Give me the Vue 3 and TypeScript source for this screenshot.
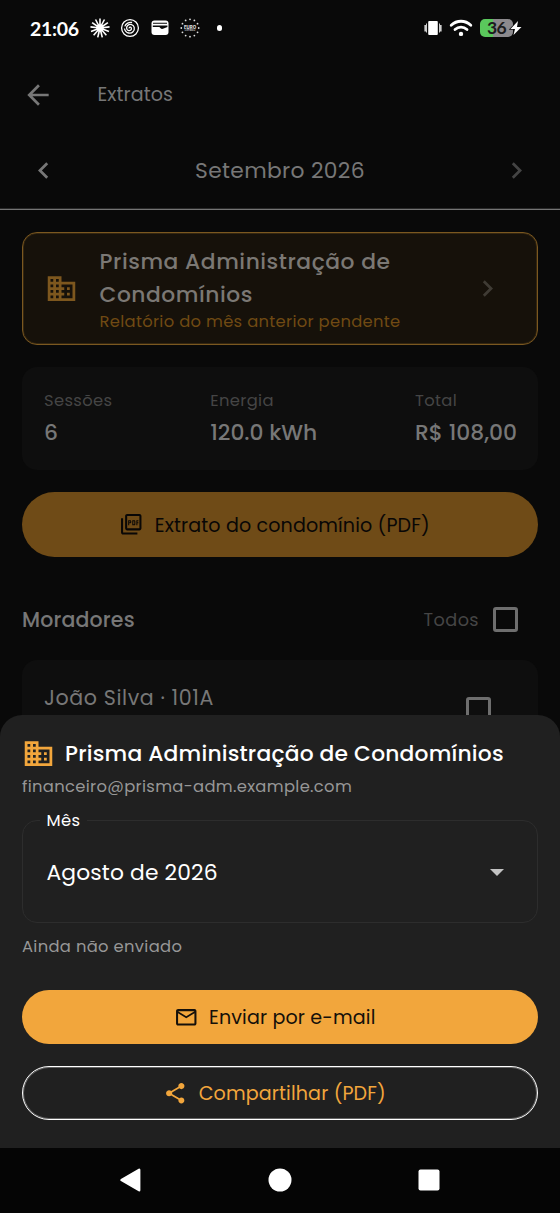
<script setup lang="ts">
interface Stat {
  label: string
  value: string
  key: string
}

const stats: Stat[] = [
  { label: 'Sessões', value: '6', key: 'sessions' },
  { label: 'Energia', value: '120.0 kWh', key: 'energy' },
  { label: 'Total', value: 'R$ 108,00', key: 'total' },
]

const businessPath =
  'M12 7V3H2v18h20V7H12zM6 19H4v-2h2v2zm0-4H4v-2h2v2zm0-4H4V9h2v2zm0-4H4V5h2v2zm4 12H8v-2h2v2zm0-4H8v-2h2v2zm0-4H8V9h2v2zm0-4H8V5h2v2zm10 12h-8v-2h2v-2h-2v-2h2v-2h-2V9h8v10zm-2-8h-2v2h2v-2zm0 4h-2v2h2v-2z'
const chevronRight = 'M8.59 16.59 13.17 12 8.59 7.41 10 6l6 6-6 6z'

const ring = (count: number, radius: number) =>
  Array.from({ length: count }, (_, i) => {
    const a = (i * 2 * Math.PI) / count
    return { x: 10 + radius * Math.sin(a), y: 10 - radius * Math.cos(a) }
  })
const rays = ring(13, 9.6)
const stars = ring(12, 8.7)
</script>

<template>
  <div class="screen">
    <header class="status">
      <span class="clock">21:06</span>
      <svg class="burst" viewBox="0 0 20 20">
        <line v-for="(p, i) in rays" :key="i" x1="10" y1="10" :x2="p.x" :y2="p.y" />
        <circle cx="10" cy="10" r="3" />
      </svg>
      <svg class="spiral" viewBox="0 0 20 20">
        <circle cx="10" cy="10" r="8.4" />
        <path d="M9.2 10.4c-.3-1.3 1.6-1.7 2.1-.5.7 1.7-1 3.2-2.7 2.7-2.3-.7-2.6-3.7-.9-5.2 2.3-2 5.8-.8 6.5 2 .8 3.4-2.2 6.3-5.5 5.6-2.3-.5-3.9-2.3-4.2-4.5M4.8 8.4c1-3 4.3-4.6 7.3-3.9" />
      </svg>
      <svg class="wallet" viewBox="0 0 18 16">
        <rect x="0.5" y="0.5" width="17" height="14.5" rx="3" fill="#fff" />
        <path d="M2 2.7h14v1.1H2zM1.8 5.4h14.6v1.5l-4.4 1.9c-1 .4-2-.1-2.7-.9l-.9-1H1.8z" fill="#090909" />
      </svg>
      <svg class="euro" viewBox="0 0 20 20">
        <circle v-for="(p, i) in stars" :key="i" :cx="p.x" :cy="p.y" r="0.9" />
        <text x="10" y="10.5" text-anchor="middle" class="euro-name">EURO</text>
        <text x="10" y="13.3" text-anchor="middle" class="euro-sub">LOTERIJ</text>
      </svg>
      <i class="dot"></i>
      <span class="grow"></span>
      <svg class="vibrate" viewBox="0 0 18 16">
        <rect x="4.2" y="1" width="9.6" height="14" rx="1" />
        <rect x="0.5" y="5" width="1.3" height="6.5" />
        <rect x="2" y="3.5" width="0.8" height="9" />
        <rect x="16.2" y="5" width="1.3" height="6.5" />
        <rect x="15.2" y="3.5" width="0.8" height="9" />
      </svg>
      <svg class="wifi" viewBox="0 0 24 18">
        <path d="M2.2 6.2c5.6-5.3 14-5.3 19.6 0M6 10.5c3.5-3.2 8.5-3.2 12 0" />
        <circle cx="12" cy="14.9" r="2.2" />
      </svg>
      <span class="battery">
        <span class="level">36</span>
        <svg class="bolt" viewBox="0 0 14 16">
          <path d="M9 1 1.5 9H6l-1.5 6L12.5 7H8z" />
        </svg>
      </span>
    </header>

    <nav class="appbar">
      <svg class="i32" viewBox="0 0 24 24"><path d="M20 11H7.83l5.59-5.59L12 4l-8 8 8 8 1.41-1.41L7.83 13H20v-2z" /></svg>
      <span class="page-title">Extratos</span>
    </nav>

    <div class="month">
      <svg class="i33" viewBox="0 0 24 24"><path d="M15.41 7.41 14 6l-6 6 6 6 1.41-1.41L10.83 12z" /></svg>
      <span class="month-name">Setembro 2026</span>
      <svg class="i33 off" viewBox="0 0 24 24"><path :d="chevronRight" /></svg>
    </div>

    <main class="content">
      <section class="manager">
        <svg class="i33 biz" viewBox="0 0 24 24"><path :d="businessPath" /></svg>
        <div class="manager-text">
          <div class="manager-name">Prisma Administração de Condomínios</div>
          <div class="manager-note">Relatório do mês anterior pendente</div>
        </div>
        <svg class="i33 go" viewBox="0 0 24 24"><path :d="chevronRight" /></svg>
      </section>

      <section class="stats">
        <div v-for="s in stats" :key="s.key" class="stat">
          <div class="stat-label">{{ s.label }}</div>
          <div class="stat-value">{{ s.value }}</div>
        </div>
      </section>

      <button class="btn statement">
        <svg class="i24" viewBox="0 0 24 24"><path d="M20 2H8c-1.1 0-2 .9-2 2v12c0 1.1.9 2 2 2h12c1.1 0 2-.9 2-2V4c0-1.1-.9-2-2-2zm0 14H8V4h12v12zM4 6H2v14c0 1.1.9 2 2 2h14v-2H4V6zm12 6V9c0-.55-.45-1-1-1h-2v5h2c.55 0 1-.45 1-1zm-2-3h1v3h-1V9zm4 2h1v-1h-1V9h1V8h-2v5h1zm-8 0h1c.55 0 1-.45 1-1V9c0-.55-.45-1-1-1H9v5h1v-2zm0-2h1v1h-1V9z" /></svg>
        <span>Extrato do condomínio (PDF)</span>
      </button>

      <div class="residents-head">
        <h2>Moradores</h2>
        <span class="all">Todos</span>
        <i class="check"></i>
      </div>

      <section class="resident">
        <span class="resident-name">João Silva · 101A</span>
        <i class="check"></i>
      </section>
    </main>

    <div class="overlay">
      <section class="sheet">
        <div class="sheet-head">
          <svg class="i33" viewBox="0 0 24 24"><path :d="businessPath" /></svg>
          <span>Prisma Administração de Condomínios</span>
        </div>
        <div class="email">financeiro@prisma-adm.example.com</div>
        <fieldset class="field">
          <legend>Mês</legend>
          <span class="field-value">Agosto de 2026</span>
          <svg class="caret" viewBox="0 0 14 7"><path d="M0 0h14L7 7z" /></svg>
        </fieldset>
        <div class="sent">Ainda não enviado</div>
        <button class="btn send">
          <svg class="i24" viewBox="0 0 24 24"><path d="M22 6c0-1.1-.9-2-2-2H4c-1.1 0-2 .9-2 2v12c0 1.1.9 2 2 2h16c1.1 0 2-.9 2-2V6zm-2 0l-8 5-8-5h16zm0 12H4V8l8 5 8-5v10z" /></svg>
          <span>Enviar por e-mail</span>
        </button>
        <button class="btn share">
          <svg class="i24" viewBox="0 0 24 24"><path d="M18 16.08c-.76 0-1.44.3-1.96.77L8.91 12.7c.05-.23.09-.46.09-.7s-.04-.47-.09-.7l7.05-4.11c.54.5 1.25.81 2.04.81 1.66 0 3-1.34 3-3s-1.34-3-3-3-3 1.34-3 3c0 .24.04.47.09.7L8.04 9.81C7.5 9.31 6.79 9 6 9c-1.66 0-3 1.34-3 3s1.34 3 3 3c.79 0 1.5-.31 2.04-.81l7.12 4.16c-.05.21-.08.43-.08.65 0 1.61 1.31 2.92 2.92 2.92s2.92-1.31 2.92-2.92-1.31-2.92-2.92-2.92z" /></svg>
          <span>Compartilhar (PDF)</span>
        </button>
      </section>
      <footer class="softkeys">
        <svg class="key" viewBox="0 0 24 24"><path d="M21.2 1.8v20.4L3.5 12z" stroke="#fff" stroke-width="2.4" stroke-linejoin="round" /></svg>
        <svg class="key" viewBox="0 0 24 24"><circle cx="12" cy="12" r="11.5" /></svg>
        <svg class="key" viewBox="0 0 24 24"><rect x="1.5" y="1.5" width="21" height="21" rx="2" /></svg>
      </footer>
    </div>
  </div>
</template>

<style>
body {
  background: #090909;
}
</style>

<style scoped>
.screen {
  position: relative;
  width: 560px;
  height: 1213px;
  overflow: hidden;
  background: #090909;
  color: #777;
  font-family: Poppins, Inter, sans-serif;
  font-weight: 400;
  white-space: nowrap;
}
.screen * {
  box-sizing: border-box;
}
svg {
  display: block;
  flex: none;
  fill: currentColor;
}
.i24 { width: 24.5px; height: 24.5px; }
.i32 { width: 32px; height: 32px; }
.i33 { width: 33px; height: 33px; }
.grow { flex: 1; }

.status {
  display: flex;
  align-items: center;
  height: 57px;
  padding: 0 37px 1px 30px;
  color: #fff;
}
.clock {
  width: 60px;
  font-family: Lato, sans-serif;
  font-size: 19.5px;
  font-weight: 700;
  letter-spacing: -0.3px;
}
.burst { width: 20px; height: 20px; stroke: #fff; stroke-width: 1.6; }
.spiral { width: 20px; height: 20px; margin-left: 9.5px; fill: none; stroke: #fff; stroke-width: 1.3; }
.wallet { width: 18px; height: 16px; margin-left: 11px; }
.euro { width: 20px; height: 20px; margin-left: 11px; color: #ddd; }
.euro-name { font-family: Inter, sans-serif; font-size: 4.4px; font-weight: 800; }
.euro-sub { font-family: Inter, sans-serif; font-size: 2.6px; font-weight: 600; }
.dot {
  width: 5.5px;
  height: 5.5px;
  margin-left: 17px;
  border-radius: 50%;
  background: #fff;
}
.vibrate { width: 18px; height: 16px; }
.wifi { width: 24px; height: 18px; margin-left: 7px; }
.wifi path { fill: none; stroke: #fff; stroke-width: 2.8; stroke-linecap: round; }
.battery {
  display: flex;
  align-items: center;
  margin-left: 7px;
}
.level {
  width: 33px;
  height: 18px;
  border-radius: 5px;
  background: linear-gradient(90deg, #5ac85c 13px, #8c8a8d 13px);
  color: #1c1c1c;
  font-family: Lato, sans-serif;
  font-size: 17.5px;
  font-weight: 700;
  line-height: 18px;
  letter-spacing: -0.6px;
  text-align: center;
}
.bolt {
  width: 14px;
  height: 16px;
  margin-left: -4px;
  overflow: visible;
  stroke: #090909;
  stroke-width: 1.5;
  paint-order: stroke;
}

.appbar {
  display: flex;
  align-items: center;
  height: 75px;
  padding-left: 22px;
}
.page-title {
  margin: -1px 0 0 43.5px;
  font-size: 19.08px;
  letter-spacing: 0.05px;
}

.month {
  display: flex;
  align-items: center;
  justify-content: space-between;
  height: 78px;
  padding: 0 27px;
  border-bottom: 1px solid #747474;
  box-shadow: inset 0 -1px 0 rgba(116, 116, 116, 0.3);
}
.month-name { font-size: 21.8px; letter-spacing: 0.34px; }
.off { color: #444; }

.content {
  display: flex;
  flex-direction: column;
  padding: 22px 22px 0;
}

.manager {
  display: flex;
  align-items: center;
  height: 113px;
  padding: 0 33px 0 22px;
  border: 1px solid #7b5820;
  border-radius: 15px;
  background: #16110a;
  box-shadow: inset 0 0 0 1px rgba(123, 88, 32, 0.3);
}
.biz { color: #7d571e; }
.manager-text { flex: 1; margin-left: 21.5px; }
.manager-name {
  width: 330px;
  padding-top: 1px;
  font-size: 21.8px;
  font-weight: 500;
  line-height: 33px;
  letter-spacing: 0.54px;
  white-space: normal;
  color: #7b7874;
}
.manager-note {
  margin-top: -1px;
  font-size: 16.36px;
  line-height: 23px;
  letter-spacing: 0.31px;
  color: #704a13;
}
.go { color: #3f3b34; }

.stats {
  display: flex;
  justify-content: space-between;
  height: 103px;
  margin-top: 22px;
  padding: 21px 21px 0 22px;
  border-radius: 15px;
  background: #0e0e0e;
}
.stat-label {
  font-size: 16.36px;
  line-height: 26px;
  letter-spacing: 0.35px;
  color: #454545;
}
.stat-value {
  margin-top: 2px;
  font-size: 21.8px;
  font-weight: 500;
  line-height: 33px;
}

.btn {
  display: flex;
  align-items: center;
  justify-content: center;
  gap: 10px;
  width: 100%;
  padding: 0;
  border: 0;
  font: inherit;
  font-size: 19.08px;
}
.btn span { margin-top: 1px; }
.statement {
  height: 65px;
  margin-top: 22px;
  padding-right: 11px;
  border-radius: 33px;
  background: #6f4b17;
  color: #090706;
  letter-spacing: 0.13px;
}
.statement span { margin-left: 1px; }

.residents-head {
  display: flex;
  align-items: center;
  height: 60px;
  margin-top: 32px;
  padding-right: 20px;
}
h2 {
  flex: 1;
  margin: 0;
  font-size: 20.5px;
  font-weight: 500;
  letter-spacing: 0.15px;
}
.all { margin-right: 14px; font-size: 17.7px; letter-spacing: 0.4px; color: #454545; }
.check {
  flex: none;
  width: 25px;
  height: 25px;
  border: 3px solid #6e6e6e;
  border-radius: 3px;
}

.resident {
  display: flex;
  align-items: flex-start;
  justify-content: space-between;
  height: 120px;
  margin-top: 10.5px;
  padding: 24px 47px 0 22px;
  border-radius: 15px;
  background: #0e0e0e;
}
.resident-name { font-size: 20.6px; line-height: 28px; letter-spacing: 0.6px; }
.resident .check { margin-top: 13px; }

.overlay {
  position: absolute;
  left: 0;
  right: 0;
  bottom: 0;
}
.sheet {
  height: 433px;
  padding: 22px 22px 0;
  border-radius: 22px 22px 0 0;
  background: #202020;
  color: #fff;
}
.sheet-head {
  display: flex;
  align-items: center;
  height: 33px;
  font-size: 21.8px;
  font-weight: 500;
  letter-spacing: 0.2px;
}
.sheet-head svg { margin-right: 10px; color: #f2a63c; }
.email {
  height: 34px;
  line-height: 34px;
  font-size: 16.36px;
  letter-spacing: 0.32px;
  color: #979797;
}
.field {
  display: flex;
  align-items: center;
  height: 112px;
  margin: 7px 0 0;
  padding: 0 33px 7px 23.5px;
  border: 1px solid #2d2d2d;
  border-radius: 15px;
}
legend {
  height: 20px;
  margin-left: -7px;
  padding: 0 7px;
  font-size: 16.36px;
  line-height: 20px;
  letter-spacing: 0.4px;
}
.field-value { flex: 1; font-size: 21.8px; letter-spacing: 0.15px; }
.caret { width: 14px; height: 7px; color: #c3c3c3; }
.sent {
  height: 22px;
  margin-top: 13px;
  line-height: 22px;
  font-size: 16.36px;
  letter-spacing: 0.32px;
  color: #979797;
}
.send {
  height: 54.5px;
  margin-top: 32px;
  padding-right: 11px;
  border-radius: 28px;
  background: #f2a63c;
  color: #15100a;
  letter-spacing: 0.14px;
}
.share {
  height: 54.5px;
  margin-top: 21.5px;
  padding-right: 11px;
  border: 1px solid #fff;
  border-radius: 28px;
  background: none;
  box-shadow: inset 0 0 0 1px rgba(255, 255, 255, 0.3);
  color: #f2a63c;
  letter-spacing: 0.14px;
}
.send span, .share span { margin-left: 1px; margin-top: 2px; }
.softkeys {
  display: flex;
  justify-content: space-between;
  height: 65.5px;
  padding: 20.5px 119px 0 118px;
  background: #050505;
  color: #fff;
}
.key { width: 24px; height: 24px; }
</style>
